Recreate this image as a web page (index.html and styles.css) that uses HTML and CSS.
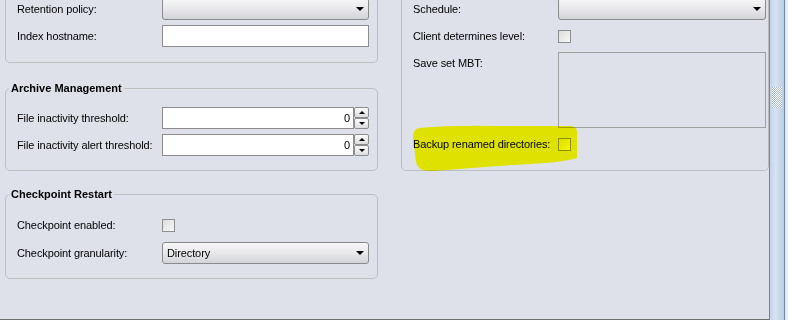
FILE: index.html
```html
<!DOCTYPE html>
<html lang="en">
<head>
    <meta charset="UTF-8">
    <title>Client Properties</title>
    <link rel="stylesheet" href="styles.css">
</head>
<body>
    <div class="window">
        <div class="panel">
            <div class="column left">
                <div class="group cut">
                    <div class="row">
                        <span class="label">Retention policy:</span>
                        <div class="combo"><span class="combo-text"></span><span class="arrow"></span></div>
                    </div>
                    <div class="row">
                        <span class="label">Index hostname:</span>
                        <div class="text-field"></div>
                    </div>
                </div>

                <div class="group archive">
                    <div class="group-title">Archive Management</div>
                    <div class="row">
                        <span class="label">File inactivity threshold:</span>
                        <div class="spinner">
                            <div class="spin-field">0</div>
                            <div class="spin-buttons">
                                <div class="spin-btn up"></div>
                                <div class="spin-btn down"></div>
                            </div>
                        </div>
                    </div>
                    <div class="row">
                        <span class="label">File inactivity alert threshold:</span>
                        <div class="spinner">
                            <div class="spin-field">0</div>
                            <div class="spin-buttons">
                                <div class="spin-btn up"></div>
                                <div class="spin-btn down"></div>
                            </div>
                        </div>
                    </div>
                </div>

                <div class="group checkpoint">
                    <div class="group-title">Checkpoint Restart</div>
                    <div class="row check-row">
                        <span class="label">Checkpoint enabled:</span>
                        <span class="checkbox"></span>
                    </div>
                    <div class="row">
                        <span class="label">Checkpoint granularity:</span>
                        <div class="combo"><span class="combo-text">Directory</span><span class="arrow"></span></div>
                    </div>
                </div>
            </div>

            <div class="column right">
                <div class="group cut">
                    <div class="row">
                        <span class="label">Schedule:</span>
                        <div class="combo"><span class="combo-text"></span><span class="arrow"></span></div>
                    </div>
                    <div class="row">
                        <span class="label">Client determines level:</span>
                        <span class="checkbox"></span>
                    </div>
                    <div class="row area-row">
                        <span class="label">Save set MBT:</span>
                        <div class="text-area"></div>
                    </div>
                    <div class="row marked">
                        <span class="label">Backup renamed directories:</span>
                        <span class="checkbox"></span>
                        <svg class="marker" width="168" height="48" viewBox="0 0 168 48">
                            <path d="M7 3 Q40 0 90 1 L159 1 Q166 2 165 9 L165 33 Q150 38 100 40 Q55 43 20 46 Q6 47 4 37 L1 12 Q1 4 7 3 Z" fill="#ffff00"/>
                        </svg>
                    </div>
                </div>
            </div>
        </div>

        <div class="scrollbar">
            <div class="scroll-track">
                <div class="gripper"></div>
            </div>
        </div>
    </div>
</body>
</html>
```

FILE: styles.css
```css
body {
    margin: 0;
    font-family: "Liberation Sans", Arial, sans-serif;
    font-size: 11px;
    letter-spacing: -0.1px;
    color: #000;
    background-color: #dfe1ea;
    overflow: hidden;
}
.window {
    display: flex;
    height: 320px;
}
.panel {
    flex: 1;
    display: flex;
    gap: 23px;
    padding-left: 5px;
    height: 320px;
    box-sizing: border-box;
    border-bottom: 1px solid #6f6f6f;
}
.column {
    display: flex;
    flex-direction: column;
}
.left {
    width: 373px;
}
.right {
    width: 368px;
}
.group {
    border: 1px solid #bebebe;
    border-radius: 5px;
    padding: 0 8px 14px 11px;
    display: flex;
    flex-direction: column;
    gap: 5px;
}
.group.cut {
    border-top: none;
    border-top-left-radius: 0;
    border-top-right-radius: 0;
    margin-top: -2px;
    padding-bottom: 15px;
}
.right .group.cut {
    padding-right: 2px;
}
.archive {
    margin-top: 25px;
}
.checkpoint {
    margin-top: 23px;
}
.group-title {
    font-weight: bold;
    letter-spacing: 0;
    height: 14px;
    line-height: 14px;
    margin: -8px 0 7px -8px;
    padding: 0 2px;
    width: fit-content;
    background-color: #dfe1ea;
}
.row {
    display: flex;
    align-items: center;
    height: 22px;
}
.check-row {
    height: 24px;
}
.area-row {
    height: 76px;
    align-items: flex-start;
}
.area-row .label {
    padding-top: 5px;
}
.label {
    width: 145px;
    flex: none;
}
.combo {
    width: 208px;
    height: 22px;
    box-sizing: border-box;
    border: 1px solid #8a8a8a;
    border-radius: 3px;
    background: linear-gradient(#f7f7f8, #e6e6e9 55%, #d3d4d8);
    display: flex;
    align-items: center;
    padding: 0 4px 0 4px;
}
.combo-text {
    flex: 1;
}
.arrow {
    width: 0;
    height: 0;
    border-left: 4px solid transparent;
    border-right: 4px solid transparent;
    border-top: 4px solid #000;
}
.text-field {
    width: 208px;
    height: 22px;
    box-sizing: border-box;
    border: 1px solid #8d8d8d;
    background-color: #fff;
}
.text-area {
    width: 208px;
    height: 76px;
    box-sizing: border-box;
    border: 1px solid #a0a0a0;
}
.spinner {
    width: 208px;
    height: 22px;
    display: flex;
}
.spin-field {
    flex: 1;
    box-sizing: border-box;
    border: 1px solid #8d8d8d;
    background-color: #fff;
    text-align: right;
    padding-right: 3px;
    line-height: 20px;
}
.spin-buttons {
    width: 15px;
    display: flex;
    flex-direction: column;
}
.spin-btn {
    flex: 1;
    border: 1px solid #8d8d8d;
    border-radius: 2px;
    background: linear-gradient(#fbfbfb, #dcdde0);
    display: flex;
    align-items: center;
    justify-content: center;
}
.spin-btn::after {
    content: "";
    border-left: 3px solid transparent;
    border-right: 3px solid transparent;
}
.spin-btn.up::after {
    border-bottom: 3px solid #000;
}
.spin-btn.down::after {
    border-top: 3px solid #000;
}
.checkbox {
    width: 13px;
    height: 13px;
    box-sizing: border-box;
    border: 1px solid #8e8f8f;
    background: linear-gradient(135deg, #dcdcdc, #f8f8f8);
}
.marked {
    position: relative;
}
.marker {
    position: absolute;
    left: -1px;
    top: -8px;
    mix-blend-mode: multiply;
}
.scrollbar {
    width: 19px;
    height: 320px;
    display: flex;
    background-color: #e6ebf3;
}
.scroll-track {
    width: 14px;
    border-left: 1px solid #6e84a6;
    border-right: 1px solid #6e84a6;
    background: linear-gradient(90deg, #c2d4ea, #d7e3f1 40%, #b9cde4);
    padding-top: 87px;
}
.gripper {
    width: 10px;
    height: 21px;
    margin-left: 2px;
    background: repeating-conic-gradient(#ffffff 0 25%, #a6b8cf 0 50%);
    background-size: 2px 2px;
}
```
